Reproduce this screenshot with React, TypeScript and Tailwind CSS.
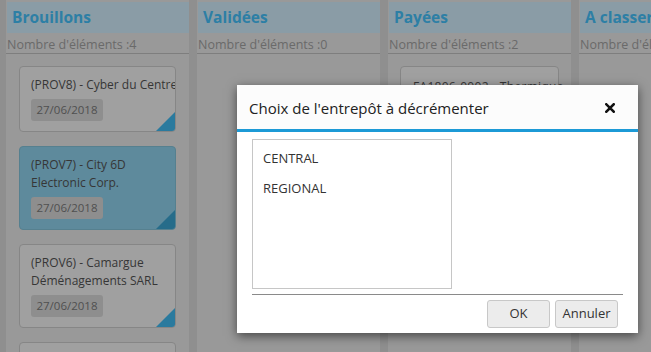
import React from "react";

const font = { fontFamily: '"Open Sans", "Noto Sans", sans-serif' };

type Card = { title: string[]; date: string; selected?: boolean };

function KCard({ c }: { c: Card }) {
  return (
    <div
      className={`relative mx-[13px] mb-[14px] flex flex-col items-start overflow-hidden rounded-[4px] border px-[11px] pt-[9px] pb-[10px] ${
        c.selected ? "border-[#56808f] bg-[#5e8a9c]" : "border-[#868686] bg-[#a0a0a0]"
      }`}
    >
      {c.title.map((t, i) => (
        <div key={i} className="text-[12px] leading-[18px] text-[#363636] whitespace-nowrap">
          {t}
        </div>
      ))}
      <div className="mt-[5px] h-[22px] w-[72px] rounded-[3px] bg-[#8e8e8e] text-center text-[11.5px] leading-[22px] text-[#505050]">
        {c.date}
      </div>
      <div
        className={`absolute right-0 bottom-0 h-[19px] w-[19px] ${c.selected ? "bg-[#266c8a]" : "bg-[#2a7a9e]"}`}
        style={{ clipPath: "polygon(100% 0, 100% 100%, 0 100%)" }}
      />
    </div>
  );
}

function Column({ title, count, cards, children }: { title: string; count: number; cards?: Card[]; children?: React.ReactNode }) {
  return (
    <div className="flex h-[352px] w-[183px] shrink-0 flex-col bg-[#999999] pt-[2px]">
      <div className="ml-[1px] h-[31px] bg-[#8a9ca6] px-[5px] text-[15.5px] font-bold leading-[31px] text-[#2d7fa5] whitespace-nowrap">
        {title}
      </div>
      <div className="border-b border-[#7e7e7e] pt-[3px] pl-[1px] text-[12.5px] leading-[17px] text-[#6a6a6a] whitespace-nowrap">
        Nombre d'éléments :{count}
      </div>
      <div className="pt-[12px]">
        {cards?.map((c, i) => (
          <KCard key={i} c={c} />
        ))}
        {children}
      </div>
    </div>
  );
}

export default function App() {
  const cards: Card[] = [
    { title: ["(PROV8) - Cyber du Centre"], date: "27/06/2018" },
    { title: ["(PROV7) - City 6D", "Electronic Corp."], date: "27/06/2018", selected: true },
    { title: ["(PROV6) - Camargue", "Déménagements SARL"], date: "27/06/2018" },
    { title: ["(PROV5) - ..."], date: "27/06/2018" },
  ];
  return (
    <div className="relative h-[352px] w-[651px] overflow-hidden bg-[#8f8f8f]" style={font}>
      <div className="flex gap-[8px] pl-[6px]">
        <Column title="Brouillons" count={4} cards={cards} />
        <Column title="Validées" count={0} />
        <Column title="Payées" count={2}>
          <div className="mx-[12px] h-[60px] rounded-[4px] border border-[#868686] bg-[#a0a0a0] px-[12px] pt-[11px]">
            <div className="text-[12px] leading-[18px] tracking-[0.3px] text-[#363636] whitespace-nowrap">
              FA1806-0002 - Thermique
            </div>
          </div>
        </Column>
        <Column title="A classer" count={0} />
      </div>

      {/* Modal */}
      <div className="absolute left-[237px] top-[85px] flex w-[401px] flex-col bg-white shadow-[0_3px_10px_rgba(0,0,0,0.55)]">
        <div className="flex h-[47px] items-center justify-between border-b-[3px] border-[#1c9ad6] bg-[#fcfcfc] pt-[2px] pl-[12px] pr-[23px]">
          <span className="text-[15px] text-[#222] whitespace-nowrap">Choix de l'entrepôt à décrémenter</span>
          <svg width="10" height="10" viewBox="0 0 10 10">
            <path d="M1.3 1.3 L8.7 8.7 M8.7 1.3 L1.3 8.7" stroke="#111" strokeWidth="2.6" strokeLinecap="square" />
          </svg>
        </div>
        <div className="px-[15px] pt-[7px] pb-[5px]">
          <div className="h-[150px] w-[200px] border border-[#c6c6c6] pt-[3px]">
            <div className="px-[10px] text-[13px] leading-[30px] text-[#333]">CENTRAL</div>
            <div className="px-[10px] text-[13px] leading-[30px] text-[#333]">REGIONAL</div>
          </div>
          <div className="mt-[5px] border-t border-[#8a8a8a]" />
          <div className="flex justify-end gap-[5px] pt-[5px] pr-[5px]">
            <button className="h-[28px] w-[63px] rounded-[3px] border border-[#c8c8c8] bg-[#ececec] text-[13px] text-[#333]">OK</button>
            <button className="h-[28px] w-[63px] rounded-[3px] border border-[#c8c8c8] bg-[#ececec] text-[13px] text-[#333]">Annuler</button>
          </div>
        </div>
      </div>
    </div>
  );
}
